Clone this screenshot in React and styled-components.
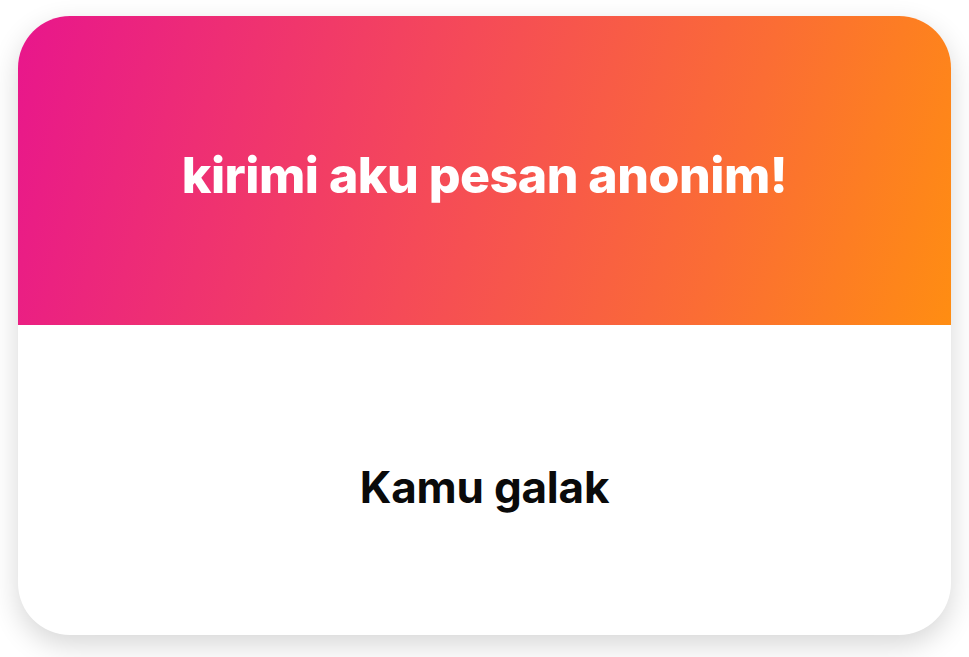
import React from 'react';
import styled, { createGlobalStyle } from 'styled-components';

const Global = createGlobalStyle`
  html, body {
    margin: 0;
    padding: 0;
    background: #ffffff;
  }
  body {
    font-family: Inter, "Noto Sans", "Liberation Sans", sans-serif;
  }
`

const Page = styled.div`
  width: 969px;
  height: 657px;
  padding: 16px 18px 22px 18px;
  box-sizing: border-box;
  background: #ffffff;
`

const Card = styled.div`
  width: 933px;
  height: 619px;
  border-radius: 52px;
  overflow: hidden;
  background: #ffffff;
  box-shadow: 0 10px 28px rgba(0, 0, 0, 0.16);
  display: flex;
  flex-direction: column;
`

const Header = styled.div`
  height: 309px;
  flex-shrink: 0;
  background: linear-gradient(105deg, #e8168c 0%, #f54a58 45%, #fb6d34 75%, #ff8d12 100%);
  display: flex;
  align-items: center;
  justify-content: center;
`

const Title = styled.h1`
  margin: 0;
  color: #ffffff;
  font-size: 50px;
  font-weight: 800;
  letter-spacing: -0.5px;
  padding-top: 8px;
`

const Body = styled.div`
  flex: 1;
  display: flex;
  align-items: center;
  justify-content: center;
`

const Message = styled.p`
  margin: 0;
  color: #0a0a0a;
  font-size: 44px;
  font-weight: 700;
  letter-spacing: -0.2px;
  padding-top: 14px;
`

export default function App() {
  return (
    <>
      <Global />
      <Page>
        <Card>
          <Header>
            <Title>kirimi aku pesan anonim!</Title>
          </Header>
          <Body>
            <Message>Kamu galak</Message>
          </Body>
        </Card>
      </Page>
    </>
  );
}
